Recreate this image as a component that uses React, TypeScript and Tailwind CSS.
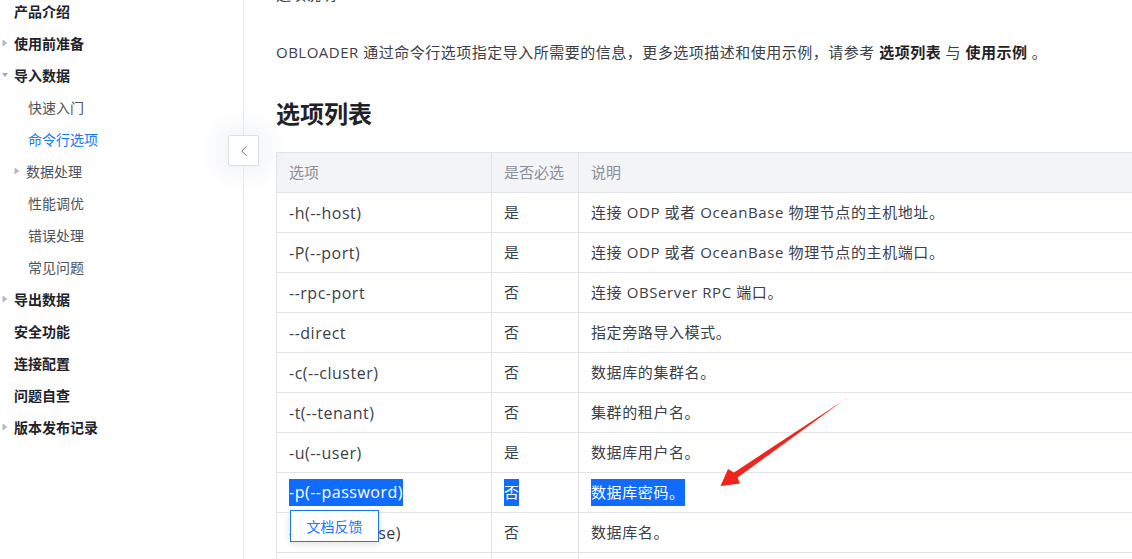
import React from 'react';
import { ChevronLeft } from 'lucide-react';

type NavItem = {
  label: string;
  level: 0 | 1;
  arrow?: 'right' | 'down';
  active?: boolean;
};

const navItems: NavItem[] = [
  { label: '产品介绍', level: 0 },
  { label: '使用前准备', level: 0, arrow: 'right' },
  { label: '导入数据', level: 0, arrow: 'down' },
  { label: '快速入门', level: 1 },
  { label: '命令行选项', level: 1, active: true },
  { label: '数据处理', level: 1, arrow: 'right' },
  { label: '性能调优', level: 1 },
  { label: '错误处理', level: 1 },
  { label: '常见问题', level: 1 },
  { label: '导出数据', level: 0, arrow: 'right' },
  { label: '安全功能', level: 0 },
  { label: '连接配置', level: 0 },
  { label: '问题自查', level: 0 },
  { label: '版本发布记录', level: 0, arrow: 'right' },
];

type Row = { option: string; required: string; desc: string; selected?: boolean };

const rows: Row[] = [
  { option: '-h(--host)', required: '是', desc: '连接 ODP 或者 OceanBase 物理节点的主机地址。' },
  { option: '-P(--port)', required: '是', desc: '连接 ODP 或者 OceanBase 物理节点的主机端口。' },
  { option: '--rpc-port', required: '否', desc: '连接 OBServer RPC 端口。' },
  { option: '--direct', required: '否', desc: '指定旁路导入模式。' },
  { option: '-c(--cluster)', required: '否', desc: '数据库的集群名。' },
  { option: '-t(--tenant)', required: '否', desc: '集群的租户名。' },
  { option: '-u(--user)', required: '是', desc: '数据库用户名。' },
  { option: '-p(--password)', required: '否', desc: '数据库密码。', selected: true },
  { option: '-D(--database)', required: '否', desc: '数据库名。' },
  { option: '-f(--file-path)', required: '是', desc: '数据文件存放的目录。' },
];

const Arrow = ({ dir }: { dir: 'right' | 'down' }) => (
  <svg width="6" height="8" viewBox="0 0 6 8" className="shrink-0">
    {dir === 'right' ? (
      <path d="M0.5 0.5 L5.5 4 L0.5 7.5 Z" fill="#b4b8bf" />
    ) : (
      <path d="M0 2 L6 2 L3 6 Z" fill="#a4a8af" />
    )}
  </svg>
);

const Sidebar = () => (
  <aside className="relative w-[244px] shrink-0 border-r border-[#e4e6eb] bg-white">
    <ul className="-mt-[5px]">
      {navItems.map((item) => {
        const color = item.active
          ? 'text-[#1677ff]'
          : item.level === 0
            ? 'text-[#1f2329] font-semibold'
            : 'text-[#4e535b]';
        return (
          <li key={item.label} className="relative flex h-8 items-center text-[14px]">
            {item.level === 0 ? (
              <>
                {item.arrow && (
                  <span className="absolute left-[2px] top-[12px]">
                    <Arrow dir={item.arrow} />
                  </span>
                )}
                <span className={`pl-[14px] ${color}`}>{item.label}</span>
              </>
            ) : item.arrow ? (
              <>
                <span className="absolute left-[14px] top-[12px]">
                  <Arrow dir={item.arrow} />
                </span>
                <span className={`pl-[26px] ${color}`}>{item.label}</span>
              </>
            ) : (
              <span className={`pl-[28px] ${color}`}>{item.label}</span>
            )}
          </li>
        );
      })}
    </ul>
    <button className="absolute left-[228px] top-[135px] flex h-[31px] w-[31px] items-center justify-center rounded-[2px] border border-[#dcdfe6] bg-white text-[#5f646c] shadow-[0_0_24px_8px_rgba(230,234,242,0.6)]">
      <ChevronLeft className="h-[18px] w-[18px]" strokeWidth={1.25} />
    </button>
  </aside>
);

const Selected = ({ children }: { children: React.ReactNode }) => (
  <span className="inline-block bg-[#0f6cff] leading-[27px] text-white">{children}</span>
);

const OptionTable = () => (
  <table className="w-[1000px] table-fixed border-collapse text-left">
    <colgroup>
      <col className="w-[215px]" />
      <col className="w-[87px]" />
      <col />
    </colgroup>
    <thead>
      <tr className="h-10 bg-[#f3f4f6] text-[15px] text-[#8a8f97]">
        <th className="border border-[#e1e3e8] px-3 font-normal">选项</th>
        <th className="border border-[#e1e3e8] px-3 font-normal">是否必选</th>
        <th className="border border-[#e1e3e8] px-3 font-normal">说明</th>
      </tr>
    </thead>
    <tbody className="text-[15px] text-[#3b4049]">
      {rows.map((r) => (
        <tr key={r.option} className="h-10">
          <td className="border border-[#e1e3e8] px-3 text-[16px] tracking-[0.5px] whitespace-nowrap">
            {r.selected ? <Selected>{r.option}</Selected> : r.option}
          </td>
          <td className="border border-[#e1e3e8] px-3">
            {r.selected ? <Selected>{r.required}</Selected> : r.required}
          </td>
          <td className="border border-[#e1e3e8] px-3 tracking-[0.6px]">
            {r.selected ? <Selected>{r.desc}</Selected> : r.desc}
          </td>
        </tr>
      ))}
    </tbody>
  </table>
);

export default function App() {
  return (
    <div
      className="relative flex h-[559px] w-[1132px] overflow-hidden bg-white"
      style={{ fontFamily: '"Open Sans", "Noto Sans CJK SC", sans-serif' }}
    >
      <Sidebar />
      <main className="min-w-0 flex-1 overflow-hidden pl-8">
        <div className="-mt-4 h-5 text-[15px] leading-5 text-[#3b4049]">选项说明</div>
        <p className="mt-[36px] text-[15px] leading-6 tracking-[0.5px] whitespace-nowrap text-[#3b4049]">
          OBLOADER 通过命令行选项指定导入所需要的信息，更多选项描述和使用示例，请参考{' '}
          <span className="font-semibold text-[#1f2329]">选项列表</span> 与{' '}
          <span className="font-semibold text-[#1f2329]">使用示例</span> 。
        </p>
        <h2 className="mt-[34px] text-[24px] leading-8 font-bold text-[#1f2329]">选项列表</h2>
        <div className="mt-[22px]">
          <OptionTable />
        </div>
      </main>

      <button className="absolute left-[290px] top-[510px] flex h-[32px] w-[89px] items-center justify-center border border-[#1677ff] bg-white text-[14px] text-[#1677ff] shadow-[0_2px_8px_rgba(0,0,0,0.12)]">
        文档反馈
      </button>

      <svg className="pointer-events-none absolute left-0 top-0" width="1132" height="559">
        <polygon
          points="847.5,397.5 737.5,477.5 740,483.5 720.5,486 728,469 734,472.5 846.5,398.5"
          fill="#f2231b"
        />
      </svg>
    </div>
  );
}
